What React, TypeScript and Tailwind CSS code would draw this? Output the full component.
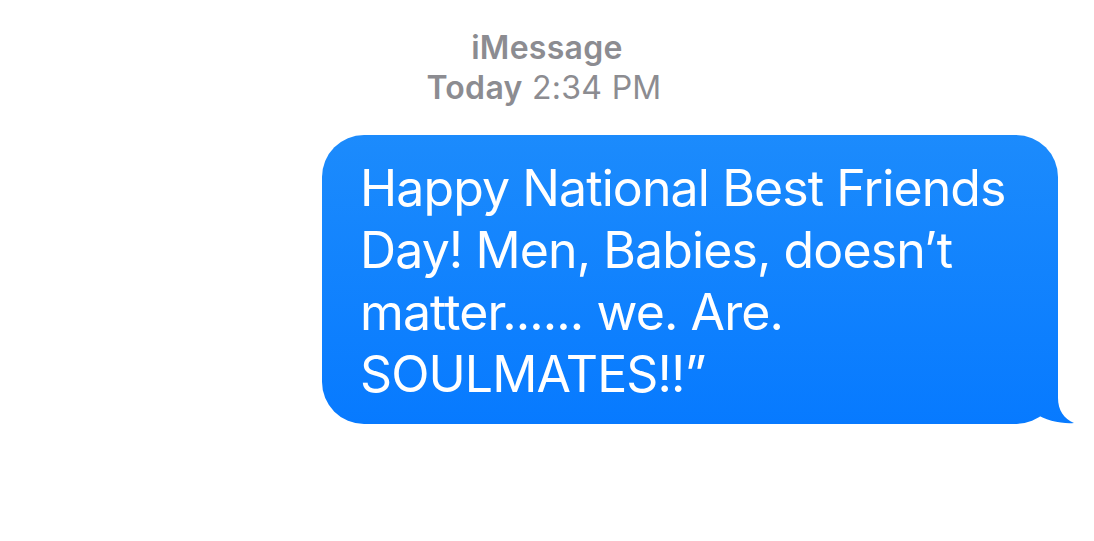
import React from "react";

export default function App() {
  return (
    <div className="w-[1094px] h-[541px] bg-white overflow-hidden flex flex-col" style={{ fontFamily: "Inter, 'Noto Sans', sans-serif" }}>
      <div className="pt-[28px] flex flex-col items-center text-[#8c8c91] text-[32px] leading-[40px] tracking-[0.3px]">
        <div className="font-semibold">iMessage</div>
        <div className="-ml-[6px]">
          <span className="font-semibold">Today</span> 2:34 PM
        </div>
      </div>
      <div className="flex justify-end pr-[36px] mt-[27px]">
        <div className="relative w-[736px] h-[289px] rounded-[42px] bg-[linear-gradient(to_bottom,#1c8bfc,#077aff)] pl-[38px] pt-[22px]">
          <p className="text-white text-[50px] leading-[62px] tracking-[-0.9px] whitespace-nowrap">
            <span className="block">Happy National Best Friends</span>
            <span className="block">Day! Men, Babies, doesn’t</span>
            <span className="block">matter...... we. Are.</span>
            <span className="block">SOULMATES!!”</span>
          </p>
          <svg className="absolute right-[-17px] bottom-0" width="60" height="50" viewBox="0 0 60 50">
            <defs>
              <linearGradient id="tailg" gradientUnits="userSpaceOnUse" x1="0" y1="-239" x2="0" y2="50">
                <stop offset="0" stopColor="#1c8bfc" />
                <stop offset="1" stopColor="#077aff" />
              </linearGradient>
            </defs>
            <path d="M0 0 H43 V24 C43 36 49 45 59 49 C48 50 30 47 20 39 C14 45 7 49 0 50 Z" fill="url(#tailg)" />
          </svg>
        </div>
      </div>
    </div>
  );
}
